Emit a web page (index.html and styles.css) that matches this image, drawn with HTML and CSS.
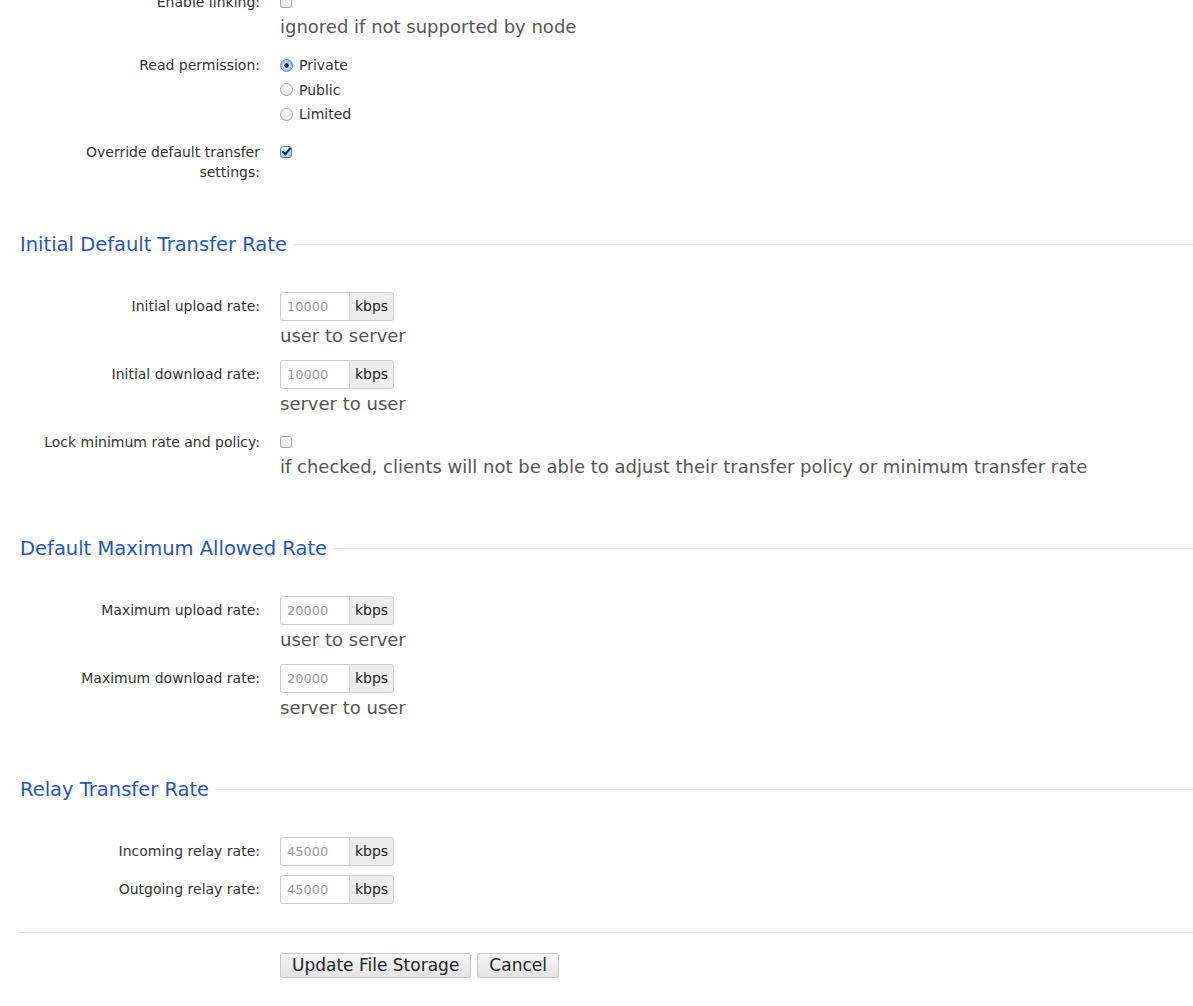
FILE: index.html
```html
<!DOCTYPE html>
<html lang="en">
<head>
  <meta charset="UTF-8">
  <meta name="viewport" content="width=device-width, initial-scale=1">
  <link rel="stylesheet" href="styles.css">
</head>
<body>

<form class="storage-form">

  <!-- Linking -->
  <div class="row row-linking">
    <label class="row-label">Enable linking:</label>
    <div class="row-control"><input type="checkbox" class="check"></div>
    <div class="hint">ignored if not supported by node</div>
  </div>

  <!-- Read permission -->
  <div class="row row-permission">
    <label class="row-label label-top">Read permission:</label>
    <div class="radio-list">
      <label class="radio-item"><input type="radio" name="perm" class="radio" checked> Private</label>
      <label class="radio-item"><input type="radio" name="perm" class="radio"> Public</label>
      <label class="radio-item"><input type="radio" name="perm" class="radio"> Limited</label>
    </div>
  </div>

  <div class="row row-override">
    <label class="row-label label-top">Override default transfer settings:</label>
    <div class="row-control control-top"><input type="checkbox" class="check" checked></div>
  </div>

  <!-- Initial Default Transfer Rate -->
  <fieldset class="section">
    <legend class="section-title">Initial Default Transfer Rate</legend>

    <div class="row row-rate">
      <label class="row-label">Initial upload rate:</label>
      <div class="input-group">
        <input type="text" class="rate-input" placeholder="10000">
        <span class="addon">kbps</span>
      </div>
      <div class="hint">user to server</div>
    </div>

    <div class="row row-rate">
      <label class="row-label">Initial download rate:</label>
      <div class="input-group">
        <input type="text" class="rate-input" placeholder="10000">
        <span class="addon">kbps</span>
      </div>
      <div class="hint">server to user</div>
    </div>

    <div class="row row-lock">
      <label class="row-label">Lock minimum rate and policy:</label>
      <div class="row-control"><input type="checkbox" class="check"></div>
      <div class="hint">if checked, clients will not be able to adjust their transfer policy or minimum transfer rate</div>
    </div>
  </fieldset>

  <!-- Default Maximum Allowed Rate -->
  <fieldset class="section">
    <legend class="section-title">Default Maximum Allowed Rate</legend>

    <div class="row row-rate">
      <label class="row-label">Maximum upload rate:</label>
      <div class="input-group">
        <input type="text" class="rate-input" placeholder="20000">
        <span class="addon">kbps</span>
      </div>
      <div class="hint">user to server</div>
    </div>

    <div class="row row-rate">
      <label class="row-label">Maximum download rate:</label>
      <div class="input-group">
        <input type="text" class="rate-input" placeholder="20000">
        <span class="addon">kbps</span>
      </div>
      <div class="hint">server to user</div>
    </div>
  </fieldset>

  <!-- Relay Transfer Rate -->
  <fieldset class="section">
    <legend class="section-title">Relay Transfer Rate</legend>

    <div class="row row-relay">
      <label class="row-label">Incoming relay rate:</label>
      <div class="input-group">
        <input type="text" class="rate-input" placeholder="45000">
        <span class="addon">kbps</span>
      </div>
    </div>

    <div class="row row-relay">
      <label class="row-label">Outgoing relay rate:</label>
      <div class="input-group">
        <input type="text" class="rate-input" placeholder="45000">
        <span class="addon">kbps</span>
      </div>
    </div>
  </fieldset>

  <div class="form-actions">
    <button type="button" class="btn">Update File Storage</button>
    <button type="button" class="btn">Cancel</button>
  </div>

</form>

</body>
</html>
```

FILE: styles.css
```css
body {
  margin: 0;
  font-family: "DejaVu Sans", Verdana, sans-serif;
  font-size: 14px;
  color: #333;
  background: #fff;
  overflow: hidden;
}

* {
  box-sizing: border-box;
}

.storage-form {
  margin-top: -8px;
  padding-left: 20px;
}

/* Form rows: label column + control column */
.row {
  display: grid;
  grid-template-columns: 240px 1fr;
  column-gap: 20px;
  align-items: center;
}

.row-label {
  text-align: right;
  line-height: 20px;
}

.label-top {
  align-self: start;
}

.row-control {
  height: 20px;
  display: flex;
  align-items: center;
}

.control-top {
  align-self: start;
}

.hint {
  grid-column: 2;
  font-size: 18px;
  line-height: 24px;
  color: #555;
  margin-top: 3px;
}

.row-permission {
  margin-top: 17px;
}

.radio-list {
  display: flex;
  flex-direction: column;
}

.radio-item {
  display: flex;
  align-items: center;
  height: 24.5px;
  gap: 6px;
  margin-top: -3px;
}

.radio-item + .radio-item {
  margin-top: 0;
}

.row-permission .row-label {
  margin-top: -1px;
  line-height: 21px;
}

.row-override {
  margin-top: 15px;
}

.row-override .row-label {
  padding-left: 60px;
}

/* Checkbox and radio, drawn by hand */
.check,
.radio {
  -webkit-appearance: none;
  appearance: none;
  margin: 0;
  width: 12px;
  height: 12px;
  border: 1px solid #a6a6a6;
  background: linear-gradient(#fdfdfd, #e9e9e9);
  position: relative;
}

.check {
  border-radius: 3px;
}

.check:checked {
  border-color: #5a7fb4;
  background: linear-gradient(#e3effd, #a9caf1);
}

.check:checked::after {
  content: "";
  position: absolute;
  left: 3px;
  top: -1px;
  width: 3px;
  height: 7px;
  border: solid #1a2a44;
  border-width: 0 2px 2px 0;
  transform: rotate(40deg);
}

.radio {
  border-radius: 50%;
  width: 13px;
  height: 13px;
}

.radio:checked {
  border-color: #5a86c4;
  background: radial-gradient(circle, #1b2a40 0 2px, #bfd8f5 2.5px, #8fb6e8);
}

/* Sections */
.section {
  border: none;
  border-top: 1px solid #e3e3e3;
  margin: 51px 0 0;
  padding: 0;
  min-width: 0;
}

.section + .section {
  margin-top: 58px;
}

.section-title {
  font-size: 19.5px;
  line-height: 24px;
  color: #2456c0;
  padding: 0 6px 0 0;
  margin-left: 0;
}

.row-rate {
  margin-top: 12px;
}

.section-title + .row-rate,
.section-title + .row-relay {
  margin-top: 35px;
}

.row-lock {
  margin-top: 16px;
}

.row-relay {
  margin-top: 9px;
}

/* kbps input group */
.input-group {
  display: flex;
  height: 29px;
}

.rate-input {
  width: 69px;
  height: 29px;
  margin: 0;
  padding: 4px 6px;
  border: 1px solid #ccc;
  border-right: none;
  border-radius: 3px 0 0 3px;
  font-family: inherit;
  font-size: 13px;
  color: #333;
}

.rate-input::placeholder {
  color: #999;
}

.addon {
  width: 45px;
  display: flex;
  align-items: center;
  justify-content: center;
  background: #eee;
  border: 1px solid #ccc;
  border-radius: 0 3px 3px 0;
  font-size: 14px;
  color: #222;
}

/* Buttons */
.form-actions {
  border-top: 1px solid #e5e5e5;
  margin-top: 28px;
  padding: 20px 0 0 260px;
  display: flex;
  gap: 6px;
}

.btn {
  height: 25px;
  padding: 0 11px;
  font-family: inherit;
  font-size: 17px;
  color: #222;
  background: linear-gradient(#f7f7f7, #e3e3e3);
  border: 1px solid #c8c8c8;
  border-radius: 2px;
}
```
